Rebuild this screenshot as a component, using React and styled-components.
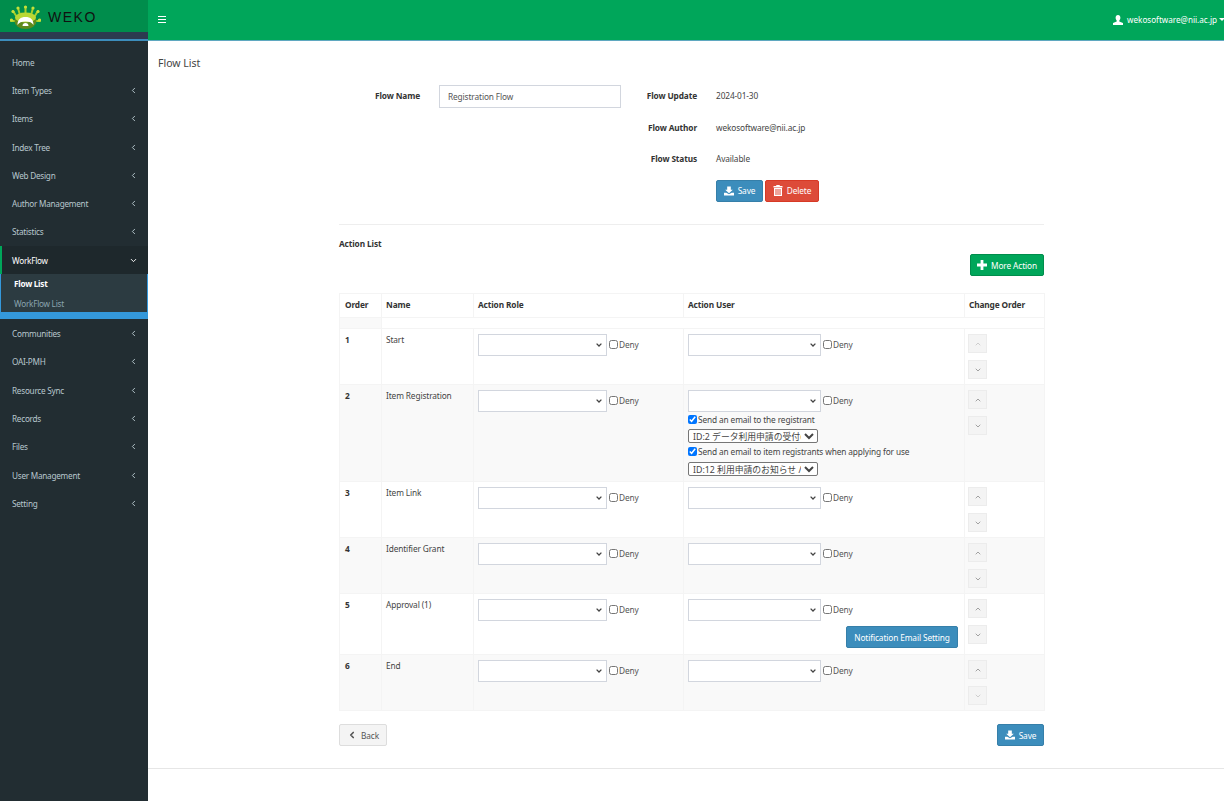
import React from 'react'
import styled, { createGlobalStyle } from 'styled-components'
import { ChevronLeft, ChevronDown, ChevronUp } from 'lucide-react'

const GlobalStyle = createGlobalStyle`
  html, body {
    margin: 0;
    padding: 0;
    background: #fff;
  }
  body {
    font-family: "Noto Sans", "Noto Sans CJK JP", "Liberation Sans", sans-serif;
    font-size: 8.300px;
    letter-spacing: -0.12px;
    color: #333;
  }
  * {
    box-sizing: border-box;
  }
`

const SaveIcon = () => (
  <svg width='10' height='10' viewBox='0 0 11 10' fill='currentColor'>
    <path d='M3.500 0h4v3.500h2.200L5.500 7.400 1.300 3.500h2.200z' />
    <path d='M0 7h2.600l2.900 1.600L8.400 7H11v3H0z' />
  </svg>
)

const TrashIcon = () => (
  <svg width='10' height='11' viewBox='0 0 10 11' fill='currentColor'>
    <path d='M3.500 0h3l.5 1h2.500v1.500H.5V1H3z' />
    <path d='M1 3h8v8H1zM2.500 4v6h1V4zm2 0v6h1V4zm2 0v6h1V4z' fillRule='evenodd' />
  </svg>
)

const PlusIcon = () => (
  <svg width='10' height='10' viewBox='0 0 10 10' fill='currentColor'>
    <path d='M3.600 0h2.800v3.600H10v2.800H6.400V10H3.600V6.400H0V3.600h3.600z' />
  </svg>
)

const UserIcon = () => (
  <svg width='10' height='10' viewBox='0 0 10 10' fill='currentColor'>
    <path d='M5 0c1.500 0 2.400 1.100 2.400 2.800 0 1.200-.5 2.200-1.100 2.700v.9L10 8v2H0V8l3.700-1.600v-.9C3.100 5 2.600 4 2.600 2.800 2.600 1.100 3.500 0 5 0z' />
  </svg>
)

const Logo = () => (
  <svg width='31' height='24' viewBox='0 0 31 24'>
    <g stroke='#a5cf2a' strokeWidth='2' strokeLinecap='round'>
      <path d='M15.500 12V2M10.500 12L8 3M20.500 12L23 3M7.500 13L3 6M23.500 13L28 6M6 16H1M25 16h5' />
    </g>
    <g fill='#c6e03a'>
      <circle cx='15.500' cy='2' r='1.600' />
      <circle cx='8' cy='3' r='1.600' />
      <circle cx='23' cy='3' r='1.600' />
      <circle cx='3' cy='6.500' r='1.600' />
      <circle cx='28' cy='6.500' r='1.600' />
      <circle cx='1.500' cy='15' r='1.600' />
      <circle cx='29.500' cy='15' r='1.600' />
    </g>
    <ellipse cx='15.500' cy='16' rx='11' ry='8' fill='#5f8a1c' />
    <ellipse cx='15.500' cy='12.500' rx='10.500' ry='5' fill='#b9d835' />
    <path d='M7.500 20c0-5.500 3-8 8-8s8 2.500 8 8c-1.500-2.500-4-3.500-8-3.500s-6.500 1-8 3.500z' fill='#fff' />
    <path d='M12.500 21c0-2 1.200-3 3-3s3 1 3 3z' fill='#fff' />
  </svg>
)

const menuItems = [
  { label: 'Home' },
  { label: 'Item Types', arrow: true },
  { label: 'Items', arrow: true },
  { label: 'Index Tree', arrow: true },
  { label: 'Web Design', arrow: true },
  { label: 'Author Management', arrow: true },
  { label: 'Statistics', arrow: true },
  { label: 'WorkFlow', open: true },
  { label: 'Communities', arrow: true },
  { label: 'OAI-PMH', arrow: true },
  { label: 'Resource Sync', arrow: true },
  { label: 'Records', arrow: true },
  { label: 'Files', arrow: true },
  { label: 'User Management', arrow: true },
  { label: 'Setting', arrow: true }
]

const actions = [
  { order: 1, name: 'Start', height: 56, first: true },
  { order: 2, name: 'Item Registration', height: 97, mail: true },
  { order: 3, name: 'Item Link', height: 56 },
  { order: 4, name: 'Identifier Grant', height: 56 },
  { order: 5, name: 'Approval (1)', height: 61, notify: true },
  { order: 6, name: 'End', height: 56, last: true }
]

const DenySelect = ({ width }) => (
  <DenyRow>
    <BigSelect aria-label='select' $width={width}>
      <option></option>
    </BigSelect>
    <DenyLabel>
      <Check type='checkbox' readOnly />
      Deny
    </DenyLabel>
  </DenyRow>
)

const App = () => {
  return (
    <Page>
      <GlobalStyle />
      <Sidebar>
        <LogoBar>
          <Logo />
          <LogoText>WEKO</LogoText>
        </LogoBar>
        <LogoStrip />
        <Menu>
          {menuItems.map(item => (
            <React.Fragment key={item.label}>
              <MenuItem $open={item.open}>
                {item.label}
                {item.arrow && <ChevronLeft size={9} strokeWidth={2.5} />}
                {item.open && <ChevronDown size={9} strokeWidth={2.5} />}
              </MenuItem>
              {item.open && (
                <>
                  <SubMenu>
                    <SubItem $active>Flow List</SubItem>
                    <SubItem>WorkFlow List</SubItem>
                  </SubMenu>
                  <BlueBand />
                </>
              )}
            </React.Fragment>
          ))}
        </Menu>
      </Sidebar>
      <Main>
        <Header>
          <Burger>
            <span />
            <span />
            <span />
          </Burger>
          <UserBox>
            <UserIcon />
            wekosoftware@nii.ac.jp
            <Caret />
          </UserBox>
        </Header>
        <Content>
          <PageTitle>Flow List</PageTitle>
          <Panel>
            <FlowForm>
              <NameField>
                <FieldLabel>Flow Name</FieldLabel>
                <NameInput defaultValue='Registration Flow' />
              </NameField>
              <InfoGrid>
                <InfoLabel>Flow Update</InfoLabel>
                <InfoValue>2024-01-30</InfoValue>
                <InfoLabel>Flow Author</InfoLabel>
                <InfoValue>wekosoftware@nii.ac.jp</InfoValue>
                <InfoLabel>Flow Status</InfoLabel>
                <InfoValue>Available</InfoValue>
                <span />
                <FormButtons>
                  <Button $width={47}>
                    <SaveIcon /> Save
                  </Button>
                  <Button $width={54} $color='#dd4b39' $border='#d73925'>
                    <TrashIcon /> Delete
                  </Button>
                </FormButtons>
              </InfoGrid>
            </FlowForm>
            <Divider />
            <ActionTitle>Action List</ActionTitle>
            <MoreRow>
              <Button $width={74} $color='#00a65a' $border='#008d4c'>
                <PlusIcon /> More Action
              </Button>
            </MoreRow>
            <ActionTable>
              <colgroup>
                <col width='42' />
                <col width='92' />
                <col width='210' />
                <col width='281' />
                <col width='80' />
              </colgroup>
              <thead>
                <tr>
                  <Th>Order</Th>
                  <Th>Name</Th>
                  <Th>Action Role</Th>
                  <Th>Action User</Th>
                  <Th>Change Order</Th>
                </tr>
              </thead>
              <tbody>
                <SpacerRow>
                  <td />
                  <td colSpan='4' />
                </SpacerRow>
                {actions.map(action => (
                  <ActionRow key={action.order} $height={action.height} $even={action.order % 2 === 0}>
                    <OrderCell>{action.order}</OrderCell>
                    <NameCell>{action.name}</NameCell>
                    <Td>
                      <DenySelect width={129} />
                    </Td>
                    <Td>
                      <DenySelect width={133} />
                      {action.mail && (
                        <MailBlock>
                          <MailLabel>
                            <Check type='checkbox' defaultChecked />
                            Send an email to the registrant
                          </MailLabel>
                          <MailSelect aria-label='mail'>
                            <option>ID:2 データ利用申請の受付のお知らせ</option>
                          </MailSelect>
                          <MailLabel>
                            <Check type='checkbox' defaultChecked />
                            Send an email to item registrants when applying for use
                          </MailLabel>
                          <MailSelect aria-label='mail'>
                            <option>ID:12 利用申請のお知らせ / Notification</option>
                          </MailSelect>
                        </MailBlock>
                      )}
                      {action.notify && (
                        <NotifyRow>
                          <Button $width={112}>Notification Email Setting</Button>
                        </NotifyRow>
                      )}
                    </Td>
                    <OrderTd>
                      <OrderButtons>
                        <OrderButton $disabled={action.first}>
                          <ChevronUp size={8} />
                        </OrderButton>
                        <OrderButton $disabled={action.last}>
                          <ChevronDown size={8} />
                        </OrderButton>
                      </OrderButtons>
                    </OrderTd>
                  </ActionRow>
                ))}
              </tbody>
            </ActionTable>
            <BottomBar>
              <BackButton>
                <ChevronLeft size={10} strokeWidth={4} /> Back
              </BackButton>
              <Button $width={47}>
                <SaveIcon /> Save
              </Button>
            </BottomBar>
          </Panel>
        </Content>
        <Footer />
      </Main>
    </Page>
  )
}

export default App

const Page = styled.div`
  display: grid;
  grid-template-columns: 148px 1fr;
  height: 801px;
  overflow: hidden;
`
const Sidebar = styled.aside`
  background: #222d32;
  display: flex;
  flex-direction: column;
`
const LogoBar = styled.div`
  align-items: center;
  background: #008d4c;
  display: flex;
  gap: 7px;
  height: 32px;
  padding: 2px 0 0 10px;
`
const LogoText = styled.span`
  color: #111;
  font-family: "Liberation Sans", sans-serif;
  font-size: 14px;
  letter-spacing: 1.500px;
`
const LogoStrip = styled.div`
  background: #2c3b50;
  border-bottom: 2px solid #3c8dbc;
  height: 9px;
`
const Menu = styled.nav`
  display: flex;
  flex-direction: column;
  font-size: 8.200px;
  letter-spacing: -0.25px;
  padding-top: 7px;
`
const MenuItem = styled.div`
  align-items: center;
  background: ${props => (props.$open ? '#1e282c' : 'transparent')};
  border-left: 2px solid ${props => (props.$open ? '#00a65a' : 'transparent')};
  color: ${props => (props.$open ? '#fff' : '#b8c7ce')};
  display: flex;
  height: 28.300px;
  justify-content: space-between;
  padding: 0 10px 0 10px;
  svg {
    flex-shrink: 0;
  }
`
const SubMenu = styled.div`
  background: #2c3b41;
  border: solid #3498db;
  border-width: 0 1px 1px;
  height: 39px;
  padding-top: 1px;
`
const SubItem = styled.div`
  color: ${props => (props.$active ? '#fff' : '#8aa4af')};
  font-weight: ${props => (props.$active ? 700 : 400)};
  height: 19.500px;
  line-height: 17px;
  padding-left: 13px;
`
const BlueBand = styled.div`
  background: #3498db;
  height: 6px;
`
const Main = styled.main`
  display: flex;
  flex-direction: column;
  min-width: 0;
`
const Header = styled.header`
  align-items: center;
  background: #00a65a;
  border-bottom: 1px solid #5fa8c0;
  color: #fff;
  display: flex;
  flex-shrink: 0;
  height: 41px;
  justify-content: space-between;
  padding: 0 0 1px 10px;
`
const Burger = styled.div`
  display: flex;
  flex-direction: column;
  gap: 1.500px;
  width: 8px;
  span {
    background: #fff;
    height: 1.500px;
  }
`
const UserBox = styled.div`
  align-items: center;
  display: flex;
  font-size: 8.150px;
  gap: 4px;
  letter-spacing: 0;
`
const Caret = styled.span`
  border-left: 3px solid transparent;
  border-right: 3px solid transparent;
  border-top: 3px solid #fff;
  margin: 0 -1px 0 -2px;
`
const Content = styled.div`
  flex: 1;
  padding: 15px 0 0 10px;
`
const PageTitle = styled.h1`
  color: #444;
  font-size: 10.500px;
  font-weight: 400;
  letter-spacing: 0;
  line-height: 14px;
  margin: 0;
`
const Panel = styled.div`
  margin: 15px 0 0 181px;
  width: 705px;
`
const FlowForm = styled.div`
  display: flex;
`
const NameField = styled.div`
  align-items: flex-start;
  display: flex;
  gap: 19px;
`
const FieldLabel = styled.label`
  font-weight: 700;
  line-height: 22px;
  text-align: right;
  width: 81px;
`
const NameInput = styled.input`
  border: 1px solid #d2d6de;
  color: #555;
  font: inherit;
  height: 23px;
  letter-spacing: inherit;
  outline: none;
  padding: 0 8px;
  width: 182px;
`
const InfoGrid = styled.div`
  display: grid;
  grid-auto-rows: 31.500px;
  grid-template-columns: 76px auto;
  column-gap: 19px;
`
const InfoLabel = styled.div`
  font-weight: 700;
  line-height: 22px;
  text-align: right;
`
const InfoValue = styled.div`
  color: #444;
  line-height: 22px;
`
const FormButtons = styled.div`
  display: flex;
  gap: 2px;
`
const Button = styled.button`
  align-items: center;
  background: ${props => props.$color || '#3c8dbc'};
  border: 1px solid ${props => props.$border || '#367fa9'};
  border-radius: 2px;
  color: #fff;
  display: inline-flex;
  font: inherit;
  gap: 4px;
  height: 22px;
  justify-content: center;
  letter-spacing: inherit;
  padding: 0;
  width: ${props => props.$width}px;
`
const Divider = styled.hr`
  border: 0;
  border-top: 1px solid #eee;
  margin: 13px 0 0;
`
const ActionTitle = styled.div`
  font-weight: 700;
  line-height: 12px;
  margin-top: 13px;
`
const MoreRow = styled.div`
  display: flex;
  justify-content: flex-end;
  margin-top: 4px;
`
const ActionTable = styled.table`
  border-collapse: collapse;
  margin-top: 17px;
  table-layout: fixed;
  width: 705px;
  td, th {
    border: 1px solid #f4f4f4;
  }
`
const Th = styled.th`
  font-weight: 700;
  height: 24px;
  padding: 0 4px 3px;
  text-align: left;
  &:first-child {
    padding-left: 5px;
  }
`
const SpacerRow = styled.tr`
  height: 11px;
  td {
    padding: 0;
  }
  td:first-child {
    background: #f9f9f9;
  }
`
const ActionRow = styled.tr`
  background: ${props => (props.$even ? '#f9f9f9' : '#fff')};
  height: ${props => props.$height}px;
`
const Td = styled.td`
  padding: 5px 4px 4px;
  vertical-align: top;
`
const OrderCell = styled(Td)`
  font-weight: 700;
  line-height: 12px;
  padding: 5px;
`
const NameCell = styled(Td)`
  color: #444;
  line-height: 12px;
  padding: 5px 4px;
`
const OrderTd = styled(Td)`
  padding-left: 3px;
`
const DenyRow = styled.div`
  align-items: center;
  display: flex;
  gap: 2px;
`
const BigSelect = styled.select`
  appearance: none;
  background: #fff url("data:image/svg+xml,%3Csvg xmlns='http://www.w3.org/2000/svg' width='6' height='4' viewBox='0 0 6 4'%3E%3Cpath d='M.6.6 3 3l2.400-2.400' fill='none' stroke='%23444' stroke-width='1.300'/%3E%3C/svg%3E") no-repeat right 4px center;
  border: 1px solid #d2d6de;
  font: inherit;
  height: 22px;
  width: ${props => props.$width}px;
`
const DenyLabel = styled.label`
  align-items: center;
  color: #555;
  display: flex;
  gap: 1px;
  margin-top: -1px;
`
const Check = styled.input`
  height: 9px;
  margin: 0;
  width: 9px;
`
const MailBlock = styled.div`
  align-items: flex-start;
  display: flex;
  flex-direction: column;
`
const MailLabel = styled.label`
  align-items: center;
  color: #444;
  display: flex;
  gap: 1px;
  height: 15px;
`
const MailSelect = styled.select`
  background: #fff;
  border: 1px solid #767676;
  border-radius: 2px;
  color: #444;
  font-family: inherit;
  font-size: 8.800px;
  height: 14px;
  margin: 2px 0 1px;
  padding: 0;
  width: 130px;
  &:last-child {
    margin-top: 3px;
  }
`
const NotifyRow = styled.div`
  display: flex;
  justify-content: flex-end;
  margin: 5px 2px 0 0;
`
const OrderButtons = styled.div`
  display: flex;
  flex-direction: column;
  gap: 7px;
`
const OrderButton = styled.div`
  align-items: center;
  background: #f4f4f4;
  border: 1px solid #ececec;
  color: ${props => (props.$disabled ? '#bbb' : '#777')};
  display: flex;
  height: 19px;
  justify-content: center;
  width: 19px;
`
const BottomBar = styled.div`
  align-items: center;
  display: flex;
  justify-content: space-between;
  margin-top: 13px;
`
const BackButton = styled.button`
  align-items: center;
  background: #f4f4f4;
  border: 1px solid #ddd;
  border-radius: 2px;
  color: #555;
  display: inline-flex;
  font: inherit;
  gap: 4px;
  height: 22px;
  justify-content: center;
  letter-spacing: inherit;
  padding: 0;
  width: 48px;
`
const Footer = styled.footer`
  border-top: 1px solid #e6e6e6;
  flex-shrink: 0;
  height: 33px;
`
